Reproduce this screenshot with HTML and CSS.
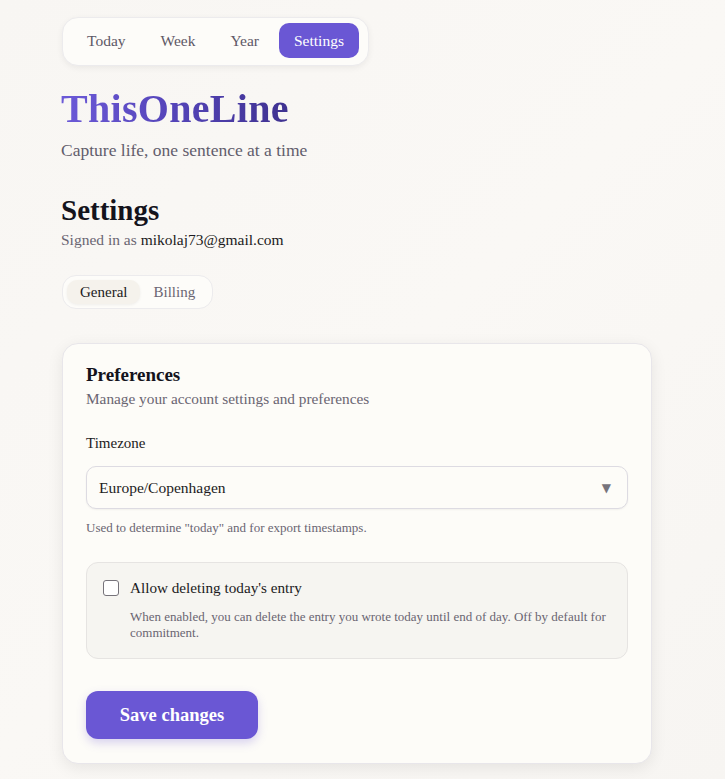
FILE: index.html
```html
<!DOCTYPE html>
<html lang="en">
<head>
<meta charset="utf-8">
<title>ThisOneLine – Settings</title>
<link rel="stylesheet" href="styles.css">
</head>
<body>
<main class="page">
  <nav class="nav">
    <a class="nav-item">Today</a>
    <a class="nav-item">Week</a>
    <a class="nav-item">Year</a>
    <a class="nav-item active">Settings</a>
  </nav>

  <header class="brand">
    <h1 class="logo">ThisOneLine</h1>
    <p class="tagline">Capture life, one sentence at a time</p>
  </header>

  <section class="settings-head">
    <h2 class="page-title">Settings</h2>
    <p class="signed">Signed in as <span class="email">mikolaj73@gmail.com</span></p>
  </section>

  <div class="tabs">
    <button class="tab active">General</button>
    <button class="tab">Billing</button>
  </div>

  <section class="card">
    <h3 class="card-title">Preferences</h3>
    <p class="card-sub">Manage your account settings and preferences</p>

    <label class="field-label">Timezone</label>
    <div class="select">
      <span>Europe/Copenhagen</span>
      <span class="arrow">▼</span>
    </div>
    <p class="help">Used to determine "today" and for export timestamps.</p>

    <div class="option">
      <div class="option-row">
        <span class="checkbox"></span>
        <span class="option-label">Allow deleting today's entry</span>
      </div>
      <p class="option-desc">When enabled, you can delete the entry you wrote today until end of day. Off by default for commitment.</p>
    </div>

    <button class="save">Save changes</button>
  </section>
</main>
</body>
</html>
```

FILE: styles.css
```css
* { box-sizing: border-box; }
html, body { margin: 0; padding: 0; }
body {
  background: linear-gradient(135deg, #f8f6f3 0%, #faf8f5 50%, #f7f5f2 100%);
  font-family: "Liberation Serif", Georgia, serif;
  color: #1c1b22;
  min-height: 779px;
}
.page {
  width: 652px;
  padding: 17px 0 20px 61px;
}
.nav {
  display: inline-flex;
  align-items: center;
  margin-left: 1px;
  padding: 5px 9px 7px 6px;
  background: #fdfcf9;
  border: 1px solid #ecebed;
  border-radius: 16px;
  box-shadow: 0 2px 6px rgba(0,0,0,0.06);
}
.nav-item {
  font-size: 15.5px;
  color: #5d5866;
  padding: 8px 17px 8px 18px;
  border-radius: 10px;
  line-height: 19px;
}
.nav-item.active {
  background: #6a57d4;
  color: #fff;
  padding: 8px 15px;
  margin-left: 3px;
}
.brand { margin-top: 23px; }
.logo {
  margin: 0;
  font-size: 40px;
  line-height: 40px;
  font-weight: 700;
  background: linear-gradient(90deg, #6c5ad8 0%, #5444b8 50%, #3f3290 100%);
  -webkit-background-clip: text;
  background-clip: text;
  color: transparent;
  letter-spacing: 0.3px;
  display: inline-block;
}
.tagline {
  margin: 10px 0 0;
  font-size: 17.5px;
  line-height: 22px;
  color: #625d6c;
}
.settings-head { margin-top: 33px; }
.page-title {
  margin: 0;
  font-size: 29px;
  line-height: 32px;
  font-weight: 700;
  color: #14131c;
}
.signed {
  margin: 4px 0 0;
  font-size: 15.5px;
  line-height: 20px;
  color: #6a6572;
}
.email { color: #1c1b22; }
.tabs {
  display: inline-flex;
  margin-top: 25px;
  margin-left: 1px;
  padding: 4px;
  background: #fdfcf9;
  border: 1px solid #ecebed;
  border-radius: 14px;
}
.tab {
  font-family: inherit;
  font-size: 15px;
  border: 0;
  background: transparent;
  color: #6a6572;
  padding: 5px 13px;
  border-radius: 10px;
  line-height: 14px;
  height: 24px;
}
.tab.active {
  background: #f5f2ec;
  color: #1c1b22;
  box-shadow: 0 1px 3px rgba(0,0,0,0.06);
}
.card {
  margin-top: 34px;
  margin-left: 1px;
  width: 590px;
  background: #fdfcf8;
  border: 1px solid #e8e6ea;
  border-radius: 16px;
  box-shadow: 0 4px 16px rgba(0,0,0,0.08);
  padding: 20px 23px 24px;
}
.card-title {
  margin: 0;
  font-size: 19px;
  line-height: 22px;
  font-weight: 700;
  color: #14131c;
}
.card-sub {
  margin: 3px 0 0;
  font-size: 15.3px;
  line-height: 20px;
  color: #6a6572;
}
.field-label {
  display: block;
  margin-top: 24px;
  font-size: 15px;
  line-height: 20px;
  color: #1c1b22;
}
.select {
  margin-top: 13px;
  height: 43px;
  display: flex;
  align-items: center;
  justify-content: space-between;
  padding: 0 16px 0 12px;
  border: 1px solid #dddbe2;
  border-radius: 10px;
  background: #fdfcf8;
  box-shadow: 0 1px 2px rgba(0,0,0,0.05);
  font-size: 15.5px;
  color: #1c1b22;
}
.arrow {
  font-family: "DejaVu Sans", sans-serif;
  font-size: 12px;
  color: #77747c;
}
.help {
  margin: 11px 0 0;
  font-size: 13px;
  line-height: 16px;
  color: #6a6572;
}
.option {
  margin-top: 26px;
  background: #f6f5f1;
  border: 1px solid #e6e4e2;
  border-radius: 12px;
  padding: 15px 16px 17px;
}
.option-row {
  display: flex;
  align-items: center;
  gap: 11px;
  height: 20px;
}
.checkbox {
  width: 16px;
  height: 16px;
  border: 1.5px solid #76737a;
  border-radius: 3px;
  background: #fff;
}
.option-label {
  font-size: 15.2px;
  line-height: 20px;
  color: #1c1b22;
}
.option-desc {
  margin: 11px 0 0 27px;
  font-size: 13px;
  line-height: 16px;
  color: #6a6572;
}
.save {
  display: block;
  margin-top: 32px;
  width: 172px;
  height: 48px;
  border: 0;
  border-radius: 12px;
  background: #6a57d4;
  color: #fff;
  font-family: inherit;
  font-size: 18.5px;
  font-weight: 700;
  box-shadow: 0 4px 10px rgba(106,87,212,0.25);
}
```
